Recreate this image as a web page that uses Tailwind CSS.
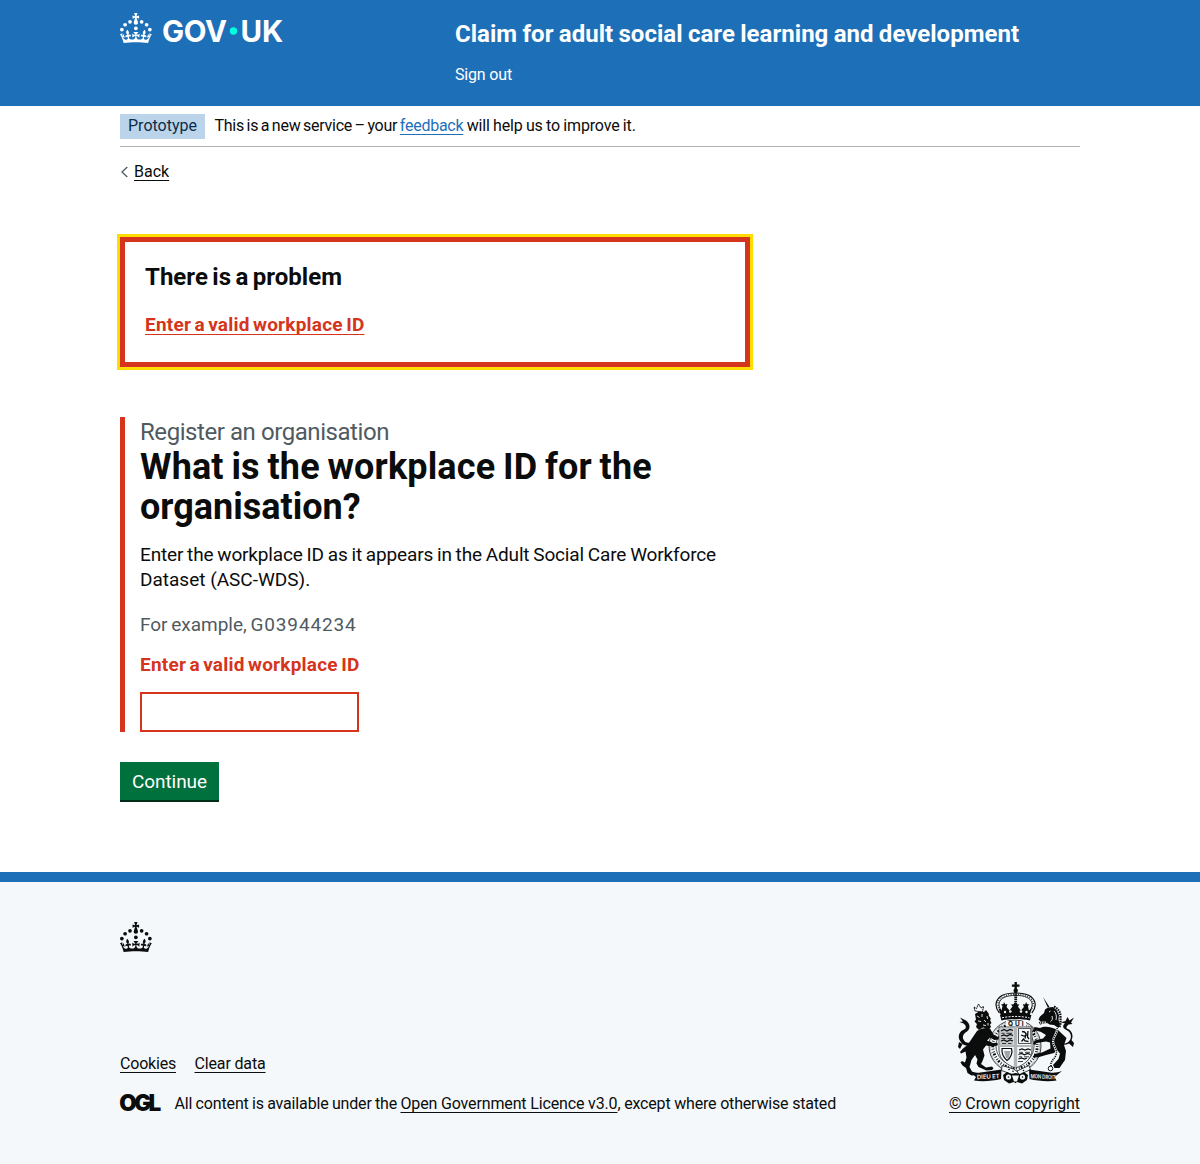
<!DOCTYPE html>
<html lang="en">
<head>
<meta charset="utf-8">
<title>Claim for adult social care learning and development</title>
<script src="https://cdn.jsdelivr.net/npm/@tailwindcss/browser@4"></script>
</head>
<body class="flex min-h-screen flex-col bg-white font-['Roboto',sans-serif] text-base leading-5 text-[#0b0c0c] [text-decoration-skip-ink:none]">

<svg class="hidden">
  <symbol id="crown" viewBox="0 0 64 60">
    <circle cx="20" cy="17.6" r="3.7"/><circle cx="10.2" cy="23.5" r="3.7"/><circle cx="3.7" cy="33.2" r="3.7"/><circle cx="31.7" cy="30.6" r="3.7"/><circle cx="43.3" cy="17.6" r="3.7"/><circle cx="53.2" cy="23.5" r="3.7"/><circle cx="59.7" cy="33.2" r="3.7"/>
    <path d="M33.1,9.8c.2-.1.3-.3.5-.5l4.6,2.4v-6.8l-4.6,1.5c-.1-.2-.3-.3-.5-.5l1.9-5.9h-6.7l1.9,5.9c-.2.1-.3.3-.5.5l-4.6-1.5v6.8l4.6-2.4c.1.2.3.3.5.5l-2.6,8c-.9,2.8,1.2,5.7,4.1,5.7h0c3,0,5.1-2.9,4.1-5.7l-2.6-8ZM37,37.9s-3.4,3.8-4.1,6.1c2.2,0,4.2-.5,6.4-2.8l-.7,8.5c-2-2.8-4.4-4.1-5.7-3.8.1,3.1.5,6.7,5.8,7.2,3.7.3,6.7-1.5,7-3.8.4-2.6-2-4.3-3.7-1.6-1.4-4.5,2.4-6.1,4.9-3.2-1.9-4.5-1.8-7.7,2.4-10.9,3,4,2.6,7.3-1.2,11.1,2.4-1.3,6.2,0,4,4.6-1.2-2.8-3.7-2.2-4.2.2-.3,1.7.7,3.7,3,4.2,1.9.3,4.7-.9,7-5.9-1.3,0-2.4.7-3.9,1.7l2.4-8c.6,2.3,1.4,3.7,2.2,4.5.6-1.6.5-2.8,0-5.3l5,1.8c-2.6,3.6-5.2,8.7-7.3,17.5-7.4-1.1-15.7-1.7-24.5-1.7h0c-8.8,0-17.1.6-24.5,1.7-2.1-8.9-4.7-13.9-7.3-17.5l5-1.8c-.5,2.5-.6,3.7,0,5.3.8-.8,1.6-2.3,2.2-4.5l2.4,8c-1.5-1-2.6-1.7-3.9-1.7,2.3,5,5.2,6.2,7,5.9,2.3-.4,3.3-2.4,3-4.2-.5-2.4-3-3.1-4.2-.2-2.2-4.6,1.6-6,4-4.6-3.7-3.7-4.2-7.1-1.2-11.1,4.2,3.2,4.3,6.4,2.4,10.9,2.5-2.8,6.3-1.3,4.9,3.2-1.8-2.7-4.1-1-3.7,1.6.3,2.3,3.3,4.1,7,3.8,5.4-.5,5.7-4.2,5.8-7.2-1.3-.2-3.7,1-5.7,3.8l-.7-8.5c2.2,2.3,4.2,2.7,6.4,2.8-.7-2.3-4.1-6.1-4.1-6.1h10.6Z"/>
  </symbol>
</svg>

<header class="h-[106px] bg-[#1d70b8] text-white">
  <div class="mx-auto flex w-[960px]">
    <a href="#" class="w-[335px] pt-[13px]" aria-label="GOV.UK">
      <svg width="163" height="30" viewBox="0 0 163 30" fill="currentColor" class="overflow-visible">
        <use href="#crown" width="32" height="30"/>
        <text x="42" y="28.600" font-family="Inter, sans-serif" font-weight="700" font-size="29.500" textLength="65" lengthAdjust="spacing">GOV</text>
        <circle cx="113.500" cy="18" r="3.700" fill="#00ffe0"/>
        <text x="120.600" y="28.600" font-family="Inter, sans-serif" font-weight="700" font-size="29.500" textLength="42.500" lengthAdjust="spacing">UK</text>
      </svg>
    </a>
    <div class="pt-[19px]">
      <a href="#" class="block text-2xl leading-[30px] font-bold tracking-[0.03px] [word-spacing:-0.7px] whitespace-nowrap">Claim for adult social care learning and development</a>
      <a href="#" class="mt-4 block tracking-[-0.17px]">Sign out</a>
    </div>
  </div>
</header>

<div class="mx-auto w-[960px]">
  <div class="flex h-[41px] items-start border-b border-[#b1b4b6] pt-2">
    <strong class="flex h-[25px] w-[85px] items-center justify-center bg-[#bbd4ea] pb-px font-normal text-[#0c2d4a]">Prototype</strong>
    <p class="ml-[9.5px] pt-[2px] whitespace-nowrap"><span class="tracking-[-0.25px] [word-spacing:-1.15px]">This is a new service – your </span><a href="#" class="text-[#1d70b8] underline decoration-1 underline-offset-[3px] tracking-[-0.255px]">feedback</a><span class="tracking-[-0.15px] [word-spacing:-0.5px]"> will help us to improve it.</span></p>
  </div>
  <a href="#" class="mt-[15px] flex h-5 w-max items-center">
    <svg width="14" height="12" viewBox="0 0 14 12" fill="none" stroke="#505a5f" stroke-width="1.300"><path d="M7.300 1 2 6l5.300 5"/></svg>
    <span class="underline decoration-1 underline-offset-[3px]">Back</span>
  </a>
</div>

<main class="mx-auto w-[960px] flex-1 pt-[55px]">
  <div class="w-[630px]">
    <section class="h-[130px] border-[5px] border-[#d4351c] px-5 pt-5 outline-3 outline-[#ffdd00]">
      <h2 class="text-2xl leading-[30px] font-bold tracking-[0.01px] [word-spacing:-1.5px]">There is a problem</h2>
      <a href="#" class="mt-5 block w-max text-[19px] leading-[25px] font-bold tracking-[0.22px] [word-spacing:-1.6px] text-[#d4351c] underline decoration-1 underline-offset-[3px]">Enter a valid workplace ID</a>
    </section>

    <form>
      <div class="mt-[50px] h-[315px] border-l-[5px] border-[#d4351c] pl-[15px] text-[19px] leading-[25px]">
        <span class="block text-2xl leading-[30px] tracking-[-0.435px] text-[#505a5f]">Register an organisation</span>
        <h1 class="text-4xl leading-10 font-bold whitespace-nowrap"><span class="tracking-[0.14px] [word-spacing:-1.3px]">What is the workplace ID for the</span><br>organisation?</h1>
        <p class="mt-[15px] whitespace-nowrap"><span class="tracking-[-0.15px] [word-spacing:-0.72px]">Enter the workplace ID as it appears in the Adult Social Care Workforce</span><br>Dataset (ASC-WDS).</p>
        <p class="mt-5 text-[#505a5f]"><span class="tracking-[-0.04px] [word-spacing:-0.8px]">For example, </span><span class="tracking-[0.85px]">G03944234</span></p>
        <p class="mt-[15px] font-bold tracking-[0.22px] [word-spacing:-1.6px] text-[#d4351c]">Enter a valid workplace ID</p>
        <input type="text" aria-label="Workplace ID" class="mt-[15px] block h-10 w-[219px] border-2 border-[#d4351c] bg-white p-[5px]">
      </div>
      <button type="button" class="mt-[30px] flex h-10 w-[99px] items-center justify-center border-b-2 border-[#002d18] bg-[#00703c] pt-px text-[19px] leading-[19px] tracking-[-0.07px] text-white">Continue</button>
    </form>
  </div>
</main>

<footer class="h-[292px] border-t-[10px] border-[#1d70b8] bg-[#f4f8fb]">
  <div class="mx-auto w-[960px] pt-10">
    <svg width="32" height="30" fill="currentColor"><use href="#crown" width="32" height="30"/></svg>
    <div class="mt-7 flex items-end justify-between">
      <div>
        <div class="flex gap-[18.5px]">
          <a href="#" class="underline decoration-1 underline-offset-[3px] tracking-[-0.2px]">Cookies</a>
          <a href="#" class="underline decoration-1 underline-offset-[3px] tracking-[-0.155px]">Clear data</a>
        </div>
        <div class="mt-5 flex h-5 items-center">
          <svg width="41" height="17" viewBox="0 0 41 17" class="mb-[3px] shrink-0 overflow-visible" role="img"><text x="-0.700" y="16.500" font-family="Inter, sans-serif" font-weight="900" font-size="22.500" textLength="42" lengthAdjust="spacing" fill="#0b0c0c">OGL</text></svg>
          <p class="ml-[13.5px] whitespace-nowrap"><span class="tracking-[-0.15px] [word-spacing:-0.5px]">All content is available under the </span><a href="#" class="underline decoration-1 underline-offset-[3px] tracking-[-0.147px]">Open Government Licence v3.0</a><span class="tracking-[-0.185px]">, except where otherwise stated</span></p>
        </div>
      </div>
      <a href="#" class="flex flex-col items-end tracking-[-0.087px]">
        <svg width="120" height="104" viewBox="0 0 120 104" class="mr-[5.5px] mb-[10px] overflow-visible" fill="#0b0c0c">
          <!-- royal crown -->
          <path d="M59.500 2h2.400v2.500h2.600v2.300h-2.600v3h-2.400v-3h-2.600v-2.300h2.600z"/><circle cx="60.700" cy="10.600" r="2.200"/>
          <g fill="none" stroke="#0b0c0c">
            <path d="M44.500 33C38.500 26 41 19 47 15.500c4.500-2.500 10-2.500 13.700-2.500s9 0 13.500 2.500c6 3.500 8.500 10.500 2.600 17.500" stroke-width="1.200"/>
            <path d="M46.500 31C42 25 44 20 49 17.500c3.500-1.800 7.500-2 11.700-2s8 .2 11.500 2c5 2.500 7 7.500 2.500 13.500" stroke-width=".9"/>
            <path d="M45.400 30C41 24 43 19.500 48 16.500c4-2 8-2.300 12.700-2.300s8.500.3 12.500 2.300c5 3 7 7.500 2.600 13.500" stroke-width="1.300" stroke-dasharray=".8 1.600"/>
            <path d="M60.700 12v14" stroke-width="2.800" stroke-dasharray="1.500 .7"/>
          </g>
          <path d="M43.500 28l3 2.500 1-4.500-1.500-1.500 2.500-.5.500-2 1.500 2.500 2-.5-1 3 3 3.500 3-4-1.500-2 2.500-.3 1.700-2.200 1.700 2.200 2.500.3-1.500 2 3 4 3-3.500-1-3 2 .5 1.500-2.500.5 2 2.500.5-1.500 1.500 1 4.500 3-2.500-2.500 8c-9-2-19.400-2-28.400 0z"/>
          <g fill="#f4f8fb"><circle cx="50" cy="32" r="1.200"/><circle cx="55.300" cy="31.500" r="1.300"/><circle cx="66" cy="31.500" r="1.300"/><circle cx="71.500" cy="32" r="1.200"/></g>
          <path d="M45 35c10-2.500 21.400-2.500 31.400 0l-1.400 5.500c-9-2-19.600-2-28.600 0z"/>
          <path d="M47 37.800c9-1.800 18.400-1.800 27.400 0" fill="none" stroke="#f4f8fb" stroke-width="1" stroke-dasharray="2 1.300"/>

          <!-- garter and quartered shield -->
          <circle cx="60" cy="66" r="26" fill="#f4f8fb" stroke="#0b0c0c" stroke-width=".8"/>
          <circle cx="60" cy="66" r="24.700" fill="none" stroke="#0b0c0c" stroke-width=".5" stroke-dasharray=".8 .8"/>
          <circle cx="60" cy="66" r="22.200" fill="none" stroke="#0b0c0c" stroke-width="2.800" stroke-dasharray=".8 1.600 1.800 1.200 .8 2"/>
          <circle cx="60" cy="66" r="19" fill="none" stroke="#0b0c0c" stroke-width=".7"/>
          <path d="M51 41h20v6H51z" fill="#f4f8fb"/>
          <text x="53" y="46" font-family="Inter, sans-serif" font-weight="700" font-size="6.500" textLength="15.500">QUI</text>
          <path d="M44 47h33v23c0 9-8 15-16.500 18C52 85 44 79 44 70z" fill="#f4f8fb" stroke="#0b0c0c" stroke-width=".7"/>
          <path d="M58.800 47h3.400v18H77v2H62.200v20h-3.400V67H44v-2h14.800z" fill="#b3b6b8"/>
          <path d="M45 48h13.500v17H45z" fill="#c3c6c8"/>
          <g fill="none" stroke="#0b0c0c" stroke-width="1.200">
            <path d="M46 51l3-1.500 3 1.500 3-1.500 3 1M46 56l3-1 3 1 3-1.500 3 1M46 61l3-1 3 1.500 3-1.500 3 1"/>
            <path d="M46.500 53.300h3m2 0h5.500M46.500 58.500h4m2 0h4.500M47 63.500h4m2 0h3.500" stroke-width=".8"/>
            <path d="M63.500 48.500h12.300v15H63.500z" stroke-width=".7"/>
            <path d="M66.500 61.500l2-2.500 1.500 2 3.500.5M66 55l3 1 4-1.500M69 51.500l2 2-1 5M73 51l-.5 6 1.500 2M67 51.500l2.500.5" stroke-width="1.300"/>
            <path d="M64 70l3-1 3 1 3-1 3 1M63.500 74.500l3-1 3 1.300 3-1.300 3 1M63.500 79l3-1 3 1 2.500-1"/>
            <path d="M64 72.300h4m2 0h5M64 76.800h3m2 0h5M63 81.500h5" stroke-width=".8"/>
            <path d="M47 68.500h9.500c1.500 4-1 10-4.500 12-3.500-3-5.500-7-5-12z" stroke-width="1.200"/>
          </g>
          <path d="M49 71h6.500l-2 7.500-2.500-.5z" fill="#a1a4a6"/>
          <path d="M47 85.500l11.500 3.500 6 4-3 3-15-5.500z" fill="#f4f8fb" stroke="#0b0c0c" stroke-width=".8"/>
          <path d="M62 91l12-5.500 1.500 4L64 95z" fill="#f4f8fb" stroke="#0b0c0c" stroke-width=".8"/>
          <circle cx="54" cy="89.500" r=".8"/><circle cx="58" cy="91.300" r=".8"/><circle cx="68.500" cy="90.500" r=".8"/>

          <!-- lion -->
          <path d="M20 31l-1-4 2.500 1.500L23.500 24l2.500 4 2.500-1.500-1 5.500z" fill="#f4f8fb" stroke="#0b0c0c" stroke-width="1" stroke-dasharray="1.600 .4"/>
          <path d="M20 34l4-2.500 5 .5 2-2 3 4-.5 1 2.500 4-1 1 1.500 3-1.500 1.500 1 2.500-2 2-6-1.500-4 2.500-3-3 1-3-2.500-2.500 1.500-2z"/>
          <path d="M22 36l2.500 1.500M27 34v3M23 41l3 .5M29 40l2 2M32 36l.5 3M28 45l3 .5M33 43v2.500" fill="none" stroke="#f4f8fb" stroke-width=".9"/>
          <path d="M22 51c4-2.500 9-4 13-2.500l3.500 6 5.500 3-.5 2-4 .5-4.500-2.500-3 3 6 2.500 4.500-.3.300 2.500-4.800 1.300-7-1-3 4 1.500 6-2 5.500-1.500 3 5 3.500 6-1 1.500 1.800-1.500 1.700-5.500.5-8-3.500-2-3.500 1-4-2.500-4.500-3.500 5-2 7 2.500 4.500 3.500 1.500v2l-4 .5-4-2.500-1.500-5-3.500-2.500-2-3 1.500-1.500 3 1.500 1.500-5-1-6-4.500 2-1-1.500 3-3.500 4.500-3.500z"/>
          <path d="M14 65.500c-4 1-7.500-1.500-9.500-5.500C2.500 55 5 51 9 49.500c3-1.200 2-4.500-.5-6L4.500 42l3.500-.5L5 37.500l6 3c4 3 5 8 1 11-3.500 2-5 5-3.500 8 1 2.500 3.500 4 7 3zM3 67l1-5 3.500 2-2.500 5z"/>
          <!-- unicorn -->
          <path d="M88 17l4.800 10.500 1.600-.8z"/>
          <path d="M93 27.500l5-.5 3.500 3 2.500 5-.5 5 1.500 4-1.500 4-4.500-3-4.500-.5-4.500-3.500-4.500.5-2-2 1.500-3 4-3.500 1-3.500z"/>
          <path d="M99 26.500c4 2 6.500 5.500 6.500 10 0 4 .5 7-1 10.500" fill="none" stroke="#0b0c0c" stroke-width="2.200" stroke-dasharray="1.600 .8"/>
          <path d="M94 32l1.500-1M99 31c2 2 3 5 2 9M97 36c1 3 0 5-2 6" fill="none" stroke="#f4f8fb" stroke-width=".9"/>
          <path d="M84.500 43.500c5-2.500 11-2 17 .5" fill="none" stroke="#0b0c0c" stroke-width="3" stroke-dasharray=".9 .8"/>
          <path d="M103 50c-6-3-13-4.500-18-2l-5.500-1-2 4 2 1.500 1.500-2 5 1.500 5 3-3 3.500-8.500 2-1.500 3.500 2 1 1.500-2 9.500-1.500 4 1 .5 6-8.500 4-8 1.500v2.500l3.500 1 8.500-2.500 8-2 3-3 3 3.500-1.500 5.500-5.500 6 1.500 3h5l2-3 3.500-5 1-9-2-6 2.500-7z"/>
          <path d="M105.500 63c4 1.500 8 .5 10-4 1.500-5-1.500-8-5-9.500-3-1.500-3-4.500-.5-6l-4-1.300 4.500-1.200 2-4 2 3.500 4.500-3-3 5 1.500 1.500-4 .5c-3 2.500-2.500 4 .5 5 3.500 2.500 4.500 7 2.500 10.500l2.500 3-1 4-4-3.500c-3 1.500-6 1.500-9 .5z"/>
          <path d="M102 48c1 6-4 8-4 13 0 6 5 8 3 14-1 3-3 4-5 8" fill="none" stroke="#f4f8fb" stroke-width="2.200"/>
          <path d="M102 48c1 6-4 8-4 13 0 6 5 8 3 14-1 3-3 4-5 8v4" fill="none" stroke="#0b0c0c" stroke-width="1.500" stroke-dasharray="1.200 .9"/>
          <circle cx="95.500" cy="88.500" r="2.300" fill="#f4f8fb" stroke="#0b0c0c" stroke-width="1"/>

          <!-- motto scroll and base ornaments -->
          <path d="M13.500 91c4 1.500 8 2 12 1.500l21-3-.5 9.500c-8 2-19 3-27 1.500l2-3.500z"/>
          <path d="M107 91c-4 1.500-8 2-12 1.500l-21-3 .5 9.500c8 2 19 3 27 1.500l-2-3.500z"/>
          <g fill="#f4f8fb" font-family="Inter, sans-serif" font-weight="600" font-size="6">
            <text x="22" y="98.800" textLength="22.500" lengthAdjust="spacingAndGlyphs" transform="rotate(-3 32 97)">DIEU ET</text>
            <text x="75.500" y="98.800" textLength="25" lengthAdjust="spacingAndGlyphs" transform="rotate(3 88 97)">MON DROIT</text>
          </g>
          <path d="M48 95l4-3 4 2 4.500-1 4.500 1 4-2 4 3-1 5-5 3.500-5-1.500-1.500 1.300-1.500-1.300-5 1.500-5-3.500z"/>
          <circle cx="53.500" cy="97" r="2.600" fill="#f4f8fb"/><circle cx="67.500" cy="97" r="2.600" fill="#f4f8fb"/>
          <path d="M57 95.500h7l-2 6h-3z" fill="#f4f8fb"/><circle cx="53.500" cy="97" r=".8"/><circle cx="67.500" cy="97" r=".8"/>
        </svg>
        <span class="underline decoration-1 underline-offset-[3px]">© Crown copyright</span>
      </a>
    </div>
  </div>
</footer>
</body>
</html>
